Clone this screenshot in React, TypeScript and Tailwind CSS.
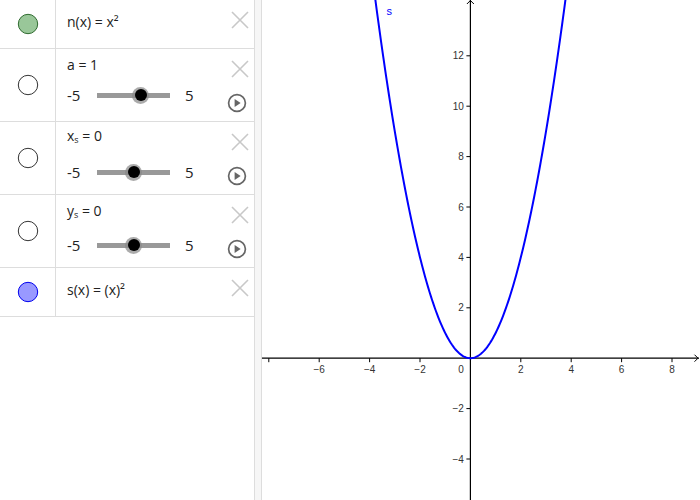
import React from 'react';

const font = { fontFamily: '"Open Sans", "DejaVu Sans", sans-serif' };

function Dot({ fill, stroke }: { fill: string; stroke: string }) {
  return (
    <svg width="22" height="22" viewBox="0 0 22 22">
      <circle cx="11" cy="11" r="9.7" fill={fill} stroke={stroke} strokeWidth="1" />
    </svg>
  );
}

function CloseIcon() {
  return (
    <svg width="18" height="18" viewBox="0 0 18 18">
      <path d="M1 1 L17 17 M17 1 L1 17" stroke="#c8c8c8" strokeWidth="1.6" fill="none" />
    </svg>
  );
}

function PlayIcon() {
  return (
    <svg width="20" height="20" viewBox="0 0 20 20">
      <circle cx="10" cy="10" r="8.4" fill="white" stroke="#666" strokeWidth="1.7" />
      <path d="M7.6 5.9 L13.6 10 L7.6 14.1 Z" fill="#666" />
    </svg>
  );
}

function Slider({ value }: { value: number }) {
  const pos = ((value + 5) / 10) * 73;
  return (
    <div className="flex items-center h-[20px] text-[15px] text-[#222]">
      <span className="w-[30px]">-5</span>
      <div className="relative w-[73px] h-[5px] bg-[#999]">
        <div
          className="absolute top-1/2 w-[17px] h-[17px] -ml-[8.5px] -mt-[8.5px] rounded-full bg-[#888]/70 flex items-center justify-center"
          style={{ left: pos }}
        >
          <div className="w-[12px] h-[12px] rounded-full bg-black" />
        </div>
      </div>
      <span className="ml-[15px]">5</span>
    </div>
  );
}

function Row({
  dot,
  children,
  play,
  h,
}: {
  dot: React.ReactNode;
  children: React.ReactNode;
  play?: boolean;
  h: string;
}) {
  return (
    <div className={`flex border-b border-[#dddddd] ${h}`}>
      <div className="w-[56px] shrink-0 border-r border-[#dddddd] flex items-center justify-center">{dot}</div>
      <div className="flex-1 pl-[11px]">{children}</div>
      <div className="w-[23px] shrink-0 flex flex-col items-start pt-[11px] -ml-[1px]">
        <CloseIcon />
        {play && (
          <div className="mt-[15px] -ml-[4px]">
            <PlayIcon />
          </div>
        )}
      </div>
    </div>
  );
}

function Graph() {
  const ox = 208.4;
  const oy = 358.2;
  const s = 25.2;
  const pts: string[] = [];
  for (let px = 100; px <= 320; px += 1) {
    const x = (px - ox) / s;
    const py = oy - x * x * s;
    if (py > -20) pts.push(`${px},${py.toFixed(2)}`);
  }
  const xt = [-8, -6, -4, -2, 2, 4, 6, 8];
  const yt = [-4, -2, 2, 4, 6, 8, 10, 12];
  return (
    <svg width="438" height="500" viewBox="0 0 438 500" className="block">
      <line x1={ox} y1="0" x2={ox} y2="500" stroke="black" strokeWidth="1.2" />
      <line x1="0" y1={oy} x2="437" y2={oy} stroke="black" strokeWidth="1.2" />
      <path d={`M${ox - 3.5} 4 L${ox} 0.5 L${ox + 3.5} 4`} stroke="black" fill="none" strokeWidth="1" />
      <path d={`M432.5 ${oy - 3.5} L436 ${oy} L432.5 ${oy + 3.5}`} stroke="black" fill="none" strokeWidth="1" />
      {xt.map((v) => (
        <g key={v}>
          <line x1={ox + v * s} y1={oy} x2={ox + v * s} y2={oy + 4} stroke="black" strokeWidth="1" />
          {v !== -8 && (
            <text
              x={ox + v * s}
              y={oy + 14.5}
              fontSize="10"
              fill="#333"
              textAnchor="middle"
              fontFamily='"Liberation Sans", Arial, sans-serif'
            >
              {v < 0 ? `\u2212${-v}` : v}
            </text>
          )}
        </g>
      ))}
      {yt.map((v) => (
        <g key={v}>
          <line x1={ox - 4} y1={oy - v * s} x2={ox} y2={oy - v * s} stroke="black" strokeWidth="1" />
          <text
            x={ox - 6.5}
            y={oy - v * s + 3.6}
            fontSize="10"
            fill="#333"
            textAnchor="end"
            fontFamily='"Liberation Sans", Arial, sans-serif'
          >
            {v < 0 ? `\u2212${-v}` : v}
          </text>
        </g>
      ))}
      <text x={ox - 6.5} y={oy + 14.5} fontSize="10" fill="#333" textAnchor="end" fontFamily='"Liberation Sans", Arial, sans-serif'>
        0
      </text>
      <polyline points={pts.join(' ')} fill="none" stroke="#0000ff" strokeWidth="2" />
      <text x="124.5" y="15" fontSize="11" fill="#0000ff" fontFamily='"Liberation Sans", Arial, sans-serif'>
        s
      </text>
    </svg>
  );
}

export default function App() {
  return (
    <div className="flex w-[700px] h-[500px] bg-white overflow-hidden" style={font}>
      {/* Algebra view */}
      <div className="w-[255px] shrink-0 border-r border-[#dddddd] text-[14px] text-[#222]">
        <Row h="h-[49px]" dot={<Dot fill="#99c799" stroke="#2f6b2f" />}>
          <div className="pt-[12px] leading-[20px]">n(x) = x²</div>
        </Row>
        <Row h="h-[73px]" play dot={<Dot fill="white" stroke="#333" />}>
          <div className="pt-[6px] leading-[20px]">a = 1</div>
          <div className="mt-[10px]">
            <Slider value={1} />
          </div>
        </Row>
        <Row h="h-[73px]" play dot={<Dot fill="white" stroke="#333" />}>
          <div className="pt-[4px] leading-[20px]">
            x<sub className="text-[9px]">s</sub> = 0
          </div>
          <div className="mt-[16px]">
            <Slider value={0} />
          </div>
        </Row>
        <Row h="h-[73px]" play dot={<Dot fill="white" stroke="#333" />}>
          <div className="pt-[6px] leading-[20px]">
            y<sub className="text-[9px]">s</sub> = 0
          </div>
          <div className="mt-[14px]">
            <Slider value={0} />
          </div>
        </Row>
        <Row h="h-[49px]" dot={<Dot fill="#9999ff" stroke="#0000ee" />}>
          <div className="pt-[12px] leading-[20px]">s(x) = (x)²</div>
        </Row>
      </div>
      {/* Splitter */}
      <div className="w-[6px] shrink-0 bg-[#f6f6f6] border-r border-[#dddddd] box-content" />
      {/* Graphics view */}
      <div className="flex-1">
        <Graph />
      </div>
    </div>
  );
}
